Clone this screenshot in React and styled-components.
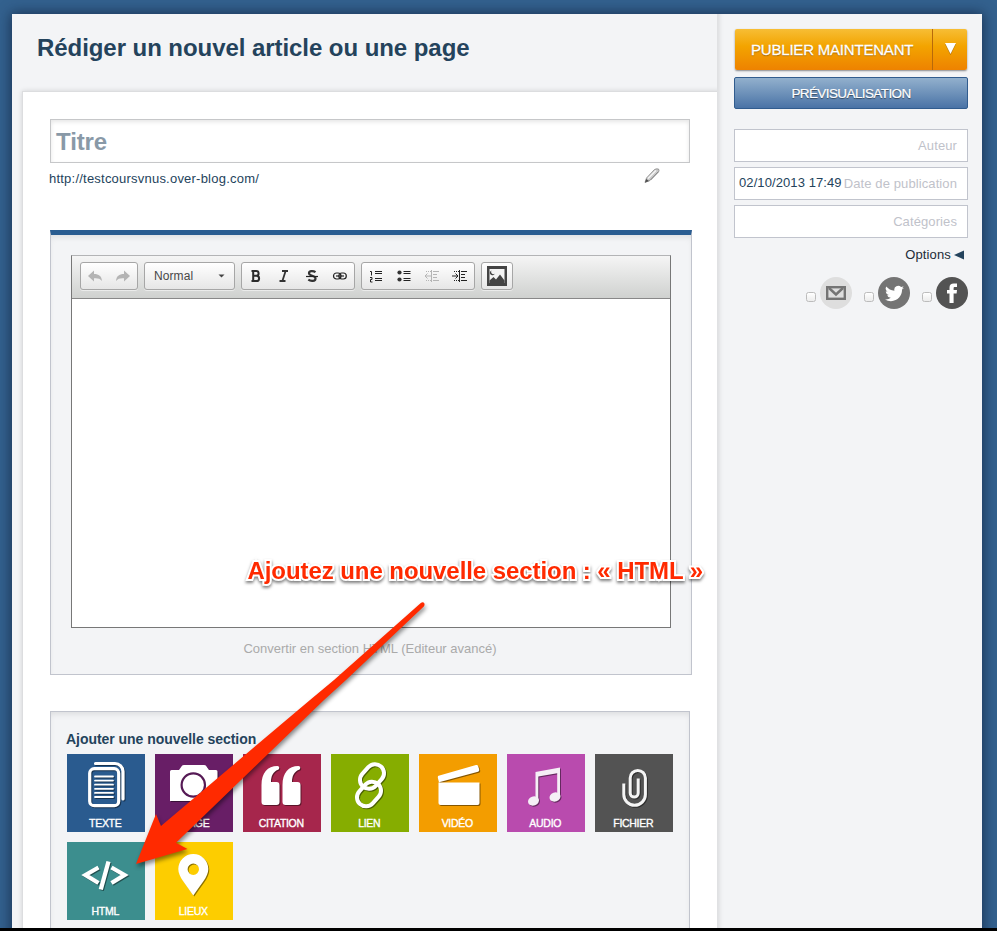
import React from 'react';
import styled, { createGlobalStyle } from 'styled-components';

const Global = createGlobalStyle`
  *, *::before, *::after { box-sizing: border-box; }
  body {
    margin: 0;
    overflow: hidden;
    font-family: "Liberation Sans", Arial, sans-serif;
    font-size: 13px;
    color: #24435c;
  }
`;

const Page = styled.div`
  position: relative;
  display: flex;
  flex-direction: column;
  width: 997px;
  height: 931px;
  overflow: hidden;
  background: #33618e;
  padding: 14px 15px 0 12px;
  border-bottom: 3px solid #000;
`;
const Shell = styled.div`
  display: grid;
  grid-template-columns: 705px 265px;
  flex: 1;
  background: #f3f4f6;
  box-shadow: 0 0 12px 1px rgba(12, 25, 50, 0.65);
`;
const Main = styled.main`
  display: flex;
  flex-direction: column;
  padding-left: 10px;
  overflow: hidden;
`;
const PageTitle = styled.h1`
  margin: 0;
  height: 77px;
  padding: 20px 0 0 15px;
  font-size: 24px;
  line-height: 28px;
  letter-spacing: ${(p) => p.$spacing}px;
  color: #24435c;
  white-space: nowrap;
`;
const Sheet = styled.section`
  flex: 1;
  width: 700px;
  background: #fff;
  border: 1px solid #dcdddf;
  box-shadow: 0 0 5px rgba(0, 0, 0, 0.14);
  padding: 27px 0 0 27px;
`;
const TitleInput = styled.div`
  width: 640px;
  height: 44px;
  border: 1px solid #c6c7c9;
  box-shadow: inset 0 2px 4px rgba(0, 0, 0, 0.1);
  padding: 8px 5px;
  font-size: 24px;
  line-height: 28px;
  font-weight: bold;
  letter-spacing: -0.1px;
  color: #8999a7;
`;
const UrlRow = styled.div`
  display: flex;
  justify-content: space-between;
  width: 611px;
  height: 67px;
  padding-top: 5px;
  line-height: 22px;
  letter-spacing: 0.22px;
  margin-left: -1px;
`;
const EditorSection = styled.section`
  width: 642px;
  height: 445px;
  background: #f3f4f6;
  border: 1px solid #c1c4cd;
  border-top: 5px solid #2a5d91;
  box-shadow: inset 0 4px 6px -2px rgba(0, 0, 0, 0.09);
  padding: 20px 20px 0;
`;
const EditorFrame = styled.div`
  width: 600px;
  height: 373px;
  border: 1px solid #777;
  border-top-color: #b3b4b6;
  background: #fff;
`;
const Toolbar = styled.div`
  display: flex;
  gap: 6px;
  height: 43px;
  padding: 6px 8px;
  background: linear-gradient(#f5f5f5, #cfd1cf);
  border-bottom: 1px solid #888;
`;
const ToolGroup = styled.div`
  display: flex;
  align-items: center;
  justify-content: ${(p) => (p.$spread ? 'space-between' : 'center')};
  width: ${(p) => p.$width}px;
  height: 28px;
  padding: 0 ${(p) => p.$pad || 0}px;
  border: 1px solid #a6a6a6;
  border-radius: 3px;
  background: linear-gradient(#fff, #e6e6e6);
  box-shadow: 0 1px 0 rgba(255, 255, 255, 0.5);
  font-size: 12px;
  letter-spacing: 0.08px;
  color: #474747;
`;
const Tool = styled.span`
  display: grid;
  place-items: center;
  width: 28px;
  height: 26px;
`;
const ConvertLink = styled.div`
  padding-top: 13px;
  width: 598px;
  text-align: center;
  line-height: 15px;
  color: #aaa;
`;
const AddSection = styled.section`
  width: 640px;
  height: 230px;
  margin-top: 36px;
  background: #f3f4f6;
  border: 1px solid #c1c4cd;
  box-shadow: inset 0 4px 6px -2px rgba(0, 0, 0, 0.1);
  padding: 18px 15px 0;
`;
const AddTitle = styled.h2`
  margin: 0 0 5px;
  font-size: 14px;
  line-height: 19px;
  letter-spacing: -0.04px;
  color: #24435c;
`;
const Tiles = styled.div`
  display: grid;
  grid-template-columns: repeat(7, 78px);
  gap: 10px;
  padding-left: 1px;
`;
const Tile = styled.div`
  width: 78px;
  height: 78px;
  background: ${(p) => p.$color};
  svg {
    display: block;
    filter: drop-shadow(1.5px 1.5px 0.5px rgba(0, 0, 0, 0.45));
  }
`;
const TileLabel = styled.div`
  padding-right: 1.5px;
  text-align: center;
  font-size: 10.5px;
  line-height: 13px;
  letter-spacing: -0.3px;
  color: #fff;
  -webkit-text-stroke: 0.35px #fff;
`;

const Sidebar = styled.aside`
  display: flex;
  flex-direction: column;
  padding: 15px 14px 0 16px;
  border-left: 1px solid #e0e1e3;
  box-shadow: inset 5px 0 5px -4px rgba(0, 0, 0, 0.12);
`;
const Publish = styled.div`
  display: grid;
  grid-template-columns: 198px 34px;
  height: 41px;
  width: 232px;
  margin-left: 1px;
  border-radius: 2px;
  background: linear-gradient(#f7be35 0%, #f3a400 42%, #ee8200 100%);
  box-shadow: 0 1px 2px rgba(0, 0, 0, 0.45);
  color: #fff;
  text-shadow: 0 1px 1px rgba(90, 50, 0, 0.6);
`;
const PublishLabel = styled.div`
  padding-left: 16px;
  font-size: 15px;
  line-height: 41px;
  letter-spacing: -0.2px;
  white-space: nowrap;
  border-right: 1px solid #b7690a;
  -webkit-text-stroke: 0.3px #fff;
`;
const PublishArrow = styled.div`
  display: flex;
  justify-content: center;
  padding-top: 14px;
  svg { filter: drop-shadow(0 1px 0.5px rgba(90, 50, 0, 0.5)); }
`;
const Preview = styled.div`
  width: 234px;
  height: 32px;
  margin: 7px 0 20px;
  border: 1px solid #315c8e;
  border-radius: 2px;
  background: linear-gradient(#92b0cd, #4a73a6);
  color: #fff;
  font-size: 13.5px;
  line-height: 31px;
  text-align: center;
  letter-spacing: ${(p) => p.$spacing}px;
  text-shadow: 0 1px 1px rgba(0, 0, 0, 0.5);
  -webkit-text-stroke: 0.2px #fff;
`;
const Field = styled.div`
  display: flex;
  justify-content: space-between;
  width: 234px;
  height: 33px;
  margin-bottom: 5px;
  padding: 0 10px 0 4px;
  border: 1px solid #c1c4cd;
  background: #fff;
  line-height: 31px;
  white-space: nowrap;
`;
const FieldValue = styled.span`
  color: #24435c;
  letter-spacing: 0.09px;
  line-height: 29px;
`;
const FieldHint = styled.span`
  color: #bfc2ca;
  letter-spacing: 0.1px;
`;
const Options = styled.div`
  display: flex;
  align-items: center;
  justify-content: flex-end;
  gap: 3px;
  height: 23px;
  padding-right: 4px;
  letter-spacing: 0.15px;
  color: #222c36;
`;
const Shares = styled.div`
  display: flex;
  justify-content: flex-end;
  gap: 10px;
  margin-top: 11px;
`;
const Share = styled.label`
  display: flex;
  align-items: center;
  gap: 4px;
`;
const CheckBox = styled.span`
  width: 10px;
  height: 10px;
  margin-top: 7px;
  margin-left: 2px;
  border: 1px solid #bcbcbc;
  border-radius: 2.5px;
  background: linear-gradient(#fff, #ececec);
`;
const Badge = styled.span`
  display: grid;
  place-items: center;
  width: 32px;
  height: 32px;
  border-radius: 50%;
  background: ${(p) => p.$color};
`;
const ArrowOverlay = styled.svg`
  position: absolute;
  left: 0;
  top: 0;
  pointer-events: none;
  filter: drop-shadow(1px 3px 2px rgba(0, 0, 0, 0.45));
`;
const Callout = styled.div`
  position: absolute;
  left: 247.5px;
  top: 557px;
  font-size: 24px;
  line-height: 28px;
  font-weight: bold;
  letter-spacing: ${(p) => p.$spacing}px;
  white-space: nowrap;
  color: #ff2a00;
  paint-order: stroke fill;
  -webkit-text-stroke: 4px #fff;
  filter: drop-shadow(0 2px 1.5px rgba(0, 0, 0, 0.5));
`;

const Icon = ({ w = 18, h = 16, children }) => (
  <svg width={w} height={h} viewBox={`0 0 ${w} ${h}`} fill="none">{children}</svg>
);

const UndoIcon = ({ flip }) => (
  <Icon w={14} h={14}>
    <path
      transform={flip ? 'translate(14 0) scale(-1 1)' : undefined}
      d="M0 7 6 1.5V5c5 0 7.5 2 8 7-2-2.4-4-3-8-2.8v3.3Z"
      fill="#b4b4b4"
    />
  </Icon>
);
const BoldIcon = () => (
  <Icon w={12} h={12}>
    <path d="M1.500 1h4.700a2.300 2.300 0 0 1 0 4.800M3.200 1v10M1.500 11h5a2.600 2.600 0 0 0 0-5.200H3.500" stroke="#2b2b2b" strokeWidth="2" />
  </Icon>
);
const ItalicIcon = () => (
  <Icon w={12} h={12}>
    <path d="M4 1h6M1.500 11h6M7.600 1 4.400 11" stroke="#333" strokeWidth="1.800" />
  </Icon>
);
const StrikeIcon = () => (
  <Icon w={14} h={12}>
    <path d="M10.500 2.200C8.500.8 4 .6 4 3.200c0 3 6.500 2 6.500 5.200 0 3-4.800 3-7.200 1.200" stroke="#333" strokeWidth="2.200" />
    <path d="M1 6.500h12" stroke="#222" strokeWidth="1.200" />
  </Icon>
);
const SmallLinkIcon = () => (
  <Icon w={16} h={10}>
    <rect x="1.500" y="2" width="7.500" height="6" rx="3" stroke="#222" strokeWidth="1.200" />
    <rect x="6.800" y="2" width="7.500" height="6" rx="3" stroke="#222" strokeWidth="1.200" />
    <path d="M4 5h8" stroke="#222" strokeWidth="1.200" />
  </Icon>
);
const NumberListIcon = () => (
  <Icon w={14} h={14}>
    <path d="M1 2.500h1.500V6.500M1 8.500h2v2H1.500v2.500H3.500" stroke="#222" />
    <path d="M6 2.500h7M6 4.500h7M6 9.500h7M6 11.500h7" stroke="#222" />
  </Icon>
);
const BulletListIcon = () => (
  <Icon w={14} h={14}>
    <circle cx="2.500" cy="3.500" r="2.100" fill="#333" />
    <circle cx="2.500" cy="10.500" r="2.100" fill="#333" />
    <path d="M6.500 2.500h7M6.500 4.500h7M6.500 9.500h7M6.500 11.500h7" stroke="#222" />
  </Icon>
);
const IndentIcon = ({ out }) => (
  <Icon w={16} h={14}>
    <g stroke={out ? '#b5b5b5' : '#222'}>
      <path d="M7.500 1v12M9 2.500h6M9 5.500h4M9 8.500h4M9 11.500h6" />
      <path d={out ? 'M7 7H1M3.500 4.500 1 7l2.500 2.500' : 'M0 7h6M3.500 4.500 6 7 3.500 9.500'} />
      <path d="M2 2.500h5M2 11.500h5" strokeDasharray="1 1" />
    </g>
  </Icon>
);
const PictureIcon = () => (
  <Icon w={20} h={20}>
    <rect width="20" height="20" fill="#444" />
    <rect x="2.500" y="3" width="15" height="14" fill="#f4f4f4" />
    <path d="M2.500 17v-2.500l4-3.500 2.500 2.500 4-5 4.500 6V17Z" fill="#444" />
    <path d="M4.500 4.500a2.500 2.500 0 1 0 3.200 3.200 2.300 2.300 0 0 1-3.200-3.200" fill="#444" />
  </Icon>
);
const PencilIcon = () => (
  <svg width="16" height="16" viewBox="0 0 16 16">
    <path d="m1 14.500 1.500-4.500 8-8.500q1.500-1 4-.5 1 1.500 0 3L6 12.500Z" fill="#c9c9c9" stroke="#858585" strokeWidth=".8" />
    <path d="m4 10.500 8-8" stroke="#f6f6f6" strokeWidth="1.500" />
    <path d="m1 14.500 1.200-3.500L5 13Z" fill="#4e4e4e" />
    <path d="M6.500 12 14 4" stroke="#888" strokeWidth="1" />
  </svg>
);

const tileArt = {
  texte: (
    <g fill="none" stroke="#fff" strokeLinecap="round">
      <path d="M28.500 9.500H48a8 8 0 0 1 8 8V45" strokeWidth="3.200" />
      <rect x="22.700" y="14.700" width="29" height="37" rx="4.500" strokeWidth="3.200" />
      <path d="M28 22.500h18M28 26.600h18M28 30.700h18M28 34.800h18M28 38.900h18M28 43h18" strokeWidth="1.800" />
    </g>
  ),
  image: (
    <>
      <path d="M15 17.500Q15 16 16.500 16H24l3-4.200Q27.500 11 29 11h20q1.500 0 2 .8L54 16h7q1.500 0 1.500 1.500V47H15Z" fill="#fff" />
      <circle cx="38.300" cy="31" r="11.700" fill="#fff" stroke="#561a55" strokeWidth="2.200" />
    </>
  ),
  citation: (
    <g fill="#fff">
      <path d="M34.500 12c2 0 2.500 3 .5 3.800-5 2-7 6.500-7 12.200h5.500a3 3 0 0 1 3 3v17a3 3 0 0 1-3 3H21.500a3 3 0 0 1-3-3V31C18.500 19 24.500 12 34.500 12Z" />
      <path d="M55.500 12c2 0 2.500 3 .5 3.800-5 2-7 6.500-7 12.200h5.500a3 3 0 0 1 3 3v17a3 3 0 0 1-3 3H42.500a3 3 0 0 1-3-3V31C39.500 19 45.500 12 55.500 12Z" />
    </g>
  ),
  lien: (
    <g fill="none" stroke="#fff" strokeWidth="4">
      <rect x="-13.500" y="-9" width="27" height="18" rx="9" transform="translate(41 22.500) rotate(-48)" />
      <rect x="-13.500" y="-9" width="27" height="18" rx="9" transform="translate(38 40) rotate(-48)" />
    </g>
  ),
  video: (
    <g fill="#fff">
      <path d="M19.500 28.500h41V49a2 2 0 0 1-2 2h-37a2 2 0 0 1-2-2Z" />
      <path d="m20.500 21.500 36.500-10.500a2 2 0 0 1 2.200 1.200l1 3.200a2 2 0 0 1-1.200 2.300L20 28.200l-1.200-4.500a1.800 1.800 0 0 1 1.700-2.200Z" />
    </g>
  ),
  audio: (
    <g fill="#f5eff6">
      <ellipse cx="26.500" cy="47" rx="5.600" ry="4.500" transform="rotate(-20 26.500 47)" />
      <ellipse cx="48" cy="43" rx="5.600" ry="4.500" transform="rotate(-20 48 43)" />
      <path d="M28.500 18 53 13.500V43h-2.800V19.200L31.300 22.500V47h-2.800Z" />
    </g>
  ),
  fichier: (
    <path d="M28.800 29.500V40.500a10.800 10.800 0 0 0 21.600 0V24a7.600 7.600 0 0 0-15.200 0v15a4 4 0 0 0 8 0V24.500" fill="none" stroke="#f5f5f5" strokeWidth="3" />
  ),
  html: (
    <path d="M31.500 25.500 18.500 33 31.500 41M44.500 25.500 57.500 33 44.500 41M41.500 19.500 33.800 47.500" fill="none" stroke="#fff" strokeWidth="4.300" />
  ),
  lieux: (
    <path fillRule="evenodd" d="M38.300 12A15 15 0 0 1 53.300 27c0 8-8 16-15 26.500C31.300 43 23.300 35 23.300 27a15 15 0 0 1 15-15Zm0 9.500a5.700 5.700 0 1 0 0 11.400 5.700 5.700 0 0 0 0-11.400Z" fill="#fff" />
  ),
};

const tiles = [
  ['texte', 'TEXTE', '#2a5b8f'],
  ['image', 'IMAGE', '#681e66'],
  ['citation', 'CITATION', '#a6264c'],
  ['lien', 'LIEN', '#86ad00'],
  ['video', 'VIDÉO', '#f39d00'],
  ['audio', 'AUDIO', '#b94bae'],
  ['fichier', 'FICHIER', '#535353'],
  ['html', 'HTML', '#3c8e8e'],
  ['lieux', 'LIEUX', '#fdcd00'],
];

const MailIcon = () => (
  <Icon w={20} h={14}>
    <rect x="1.200" y="1.200" width="17.600" height="11.600" stroke="#747474" strokeWidth="2.400" />
    <path d="m3 2 7 6.500L17 2" stroke="#747474" strokeWidth="2.400" />
  </Icon>
);
const TwitterIcon = () => (
  <svg width="19" height="19" viewBox="0 0 24 24" fill="#fff">
    <path d="M24 4.600a10 10 0 0 1-2.800.8 5 5 0 0 0 2.200-2.700c-1 .6-2 1-3.100 1.200a4.900 4.900 0 0 0-8.400 4.500C7.700 8.200 4 6.200 1.600 3.200a4.900 4.900 0 0 0 1.600 6.500 4.900 4.900 0 0 1-2.200-.6c0 2.300 1.600 4.400 3.900 4.900a5 5 0 0 1-2.200.1 4.900 4.900 0 0 0 4.600 3.400A9.900 9.900 0 0 1 0 19.500 14 14 0 0 0 7.500 21.700c9.200 0 14.300-7.700 14-14.600A10 10 0 0 0 24 4.600Z" />
  </svg>
);
const FacebookIcon = () => (
  <svg width="12" height="20" viewBox="0 0 12 20" fill="#fff">
    <path d="M3.500 20v-9.500H1V7h2.500V4.800C3.500 1.800 5 .5 7.800.5H11V4H9C7.900 4 7.600 4.500 7.600 5.400V7H11l-.4 3.500h-3V20Z" />
  </svg>
);

export default function App() {
  return (
    <>
      <Global />
      <Page>
        <Shell>
          <Main>
            <PageTitle $spacing={-0.06}>Rédiger un nouvel article ou une page</PageTitle>
            <Sheet>
              <TitleInput>Titre</TitleInput>
              <UrlRow>
                <span>http://testcoursvnus.over-blog.com/</span>
                <PencilIcon />
              </UrlRow>
              <EditorSection>
                <EditorFrame>
                  <Toolbar>
                    <ToolGroup $width={58}>
                      <Tool><UndoIcon /></Tool>
                      <Tool><UndoIcon flip /></Tool>
                    </ToolGroup>
                    <ToolGroup $width={91} $spread $pad={9}>
                      Normal
                      <svg width="7" height="4" viewBox="0 0 7 4"><path d="M.5.500h6l-3 3Z" fill="#444" /></svg>
                    </ToolGroup>
                    <ToolGroup $width={114}>
                      <Tool><BoldIcon /></Tool>
                      <Tool><ItalicIcon /></Tool>
                      <Tool><StrikeIcon /></Tool>
                      <Tool><SmallLinkIcon /></Tool>
                    </ToolGroup>
                    <ToolGroup $width={114}>
                      <Tool><NumberListIcon /></Tool>
                      <Tool><BulletListIcon /></Tool>
                      <Tool><IndentIcon out /></Tool>
                      <Tool><IndentIcon /></Tool>
                    </ToolGroup>
                    <ToolGroup $width={32}><PictureIcon /></ToolGroup>
                  </Toolbar>
                </EditorFrame>
                <ConvertLink>Convertir en section HTML (Editeur avancé)</ConvertLink>
              </EditorSection>
              <AddSection>
                <AddTitle>Ajouter une nouvelle section</AddTitle>
                <Tiles>
                  {tiles.map(([id, label, color]) => (
                    <Tile key={id} $color={color}>
                      <svg width="78" height="63" viewBox="0 0 78 63">{tileArt[id]}</svg>
                      <TileLabel>{label}</TileLabel>
                    </Tile>
                  ))}
                </Tiles>
              </AddSection>
            </Sheet>
          </Main>
          <Sidebar>
            <Publish>
              <PublishLabel>PUBLIER MAINTENANT</PublishLabel>
              <PublishArrow>
                <svg width="11" height="11" viewBox="0 0 11 11"><path d="M0 0h11L5.500 11Z" fill="#fff" /></svg>
              </PublishArrow>
            </Publish>
            <Preview $spacing={-0.6}>PRÉVISUALISATION</Preview>
            <Field><span /><FieldHint>Auteur</FieldHint></Field>
            <Field><FieldValue>02/10/2013 17:49</FieldValue><FieldHint>Date de publication</FieldHint></Field>
            <Field><span /><FieldHint>Catégories</FieldHint></Field>
            <Options>
              Options
              <svg width="10" height="10" viewBox="0 0 10 10"><path d="M10 .5v9L0 5Z" fill="#24435c" /></svg>
            </Options>
            <Shares>
              <Share><CheckBox /><Badge $color="#dedede"><MailIcon /></Badge></Share>
              <Share><CheckBox /><Badge $color="#747474"><TwitterIcon /></Badge></Share>
              <Share><CheckBox /><Badge $color="#535353"><FacebookIcon /></Badge></Share>
            </Shares>
          </Sidebar>
        </Shell>
        <ArrowOverlay width="997" height="928" viewBox="0 0 997 928">
          <path d="M420.500 603.200Q423 601.500 424.300 603.200 425 605 423.800 606.500L346 680 324 700 176 842.700 187.500 849 136 864 156 814 161 826 310 700 334 680Z" fill="#ff2a00" />
        </ArrowOverlay>
        <Callout $spacing={-0.07}>Ajoutez une nouvelle section : « HTML »</Callout>
      </Page>
    </>
  );
}
